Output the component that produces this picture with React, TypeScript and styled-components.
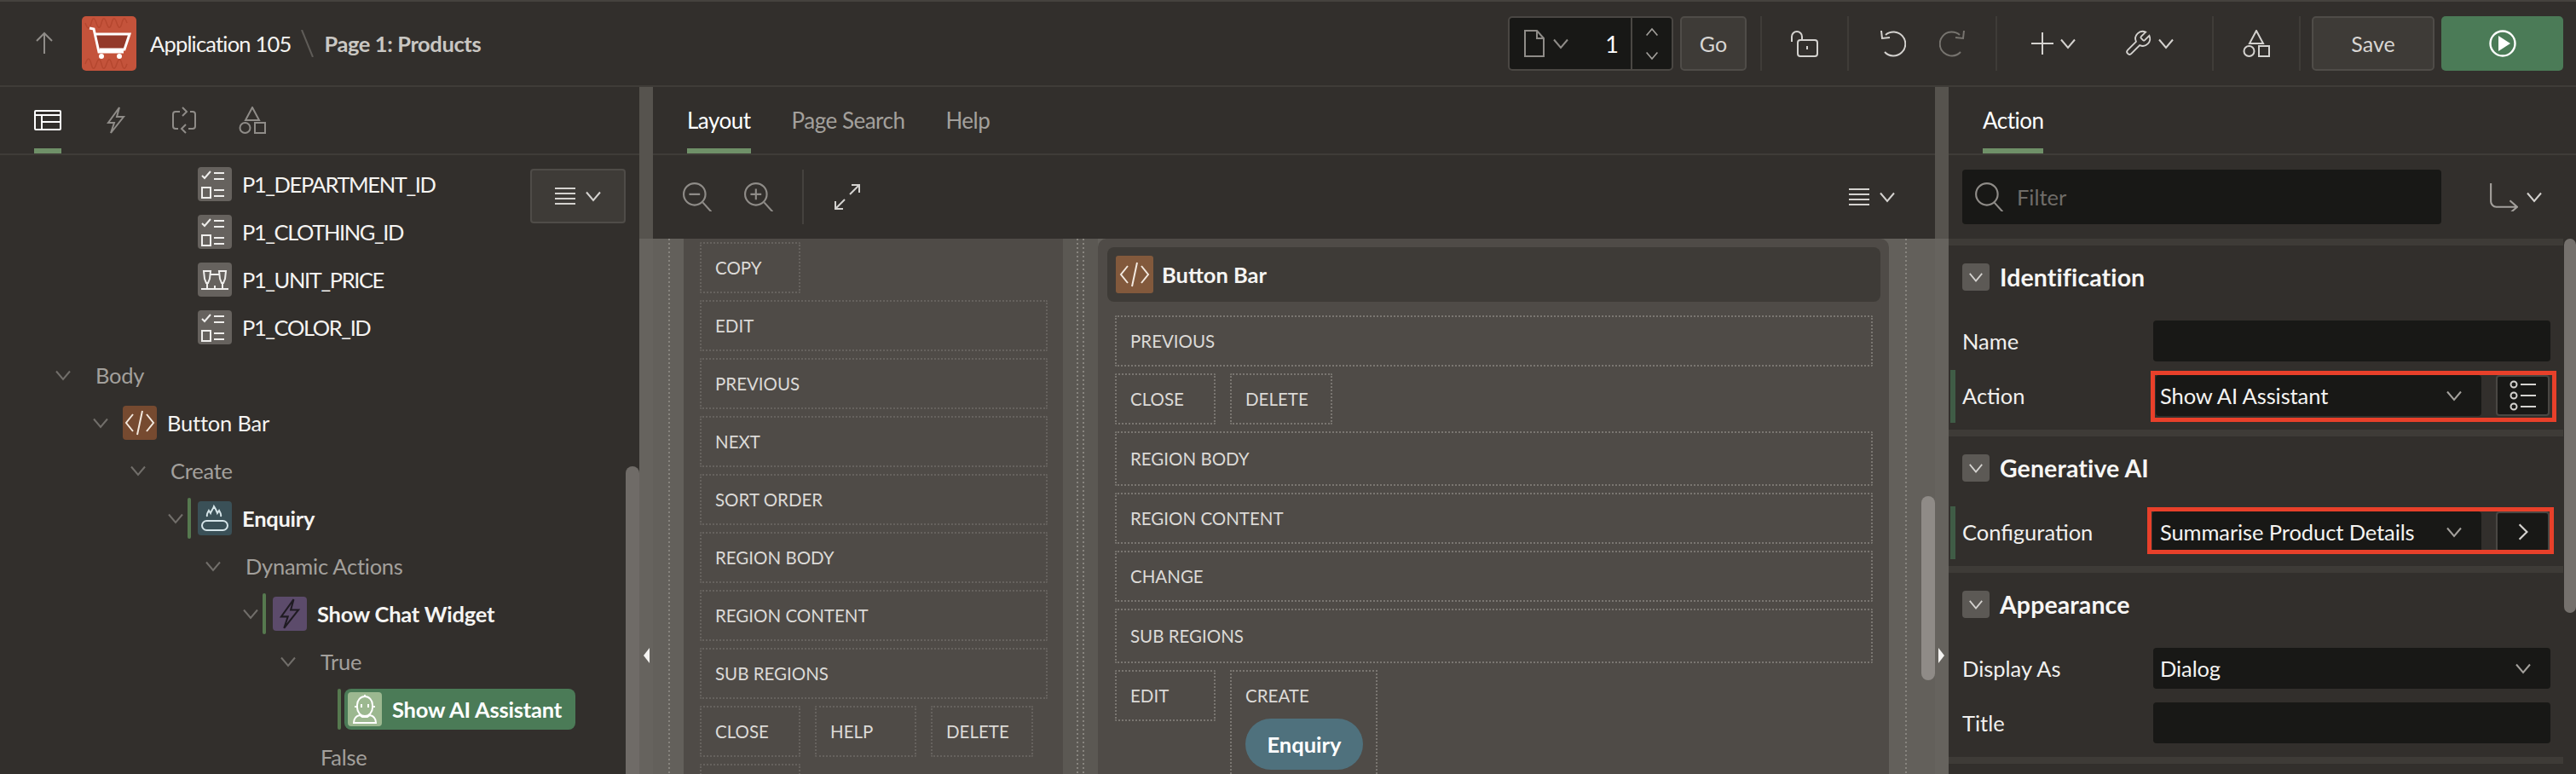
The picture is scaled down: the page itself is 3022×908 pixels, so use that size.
import React, { FC, ReactNode } from 'react';
import styled, { createGlobalStyle } from 'styled-components';

const GlobalStyle = createGlobalStyle`
    html, body {
        margin: 0;
        padding: 0;
        background: #322f2c;
    }
    * {
        box-sizing: border-box;
    }
    body {
        font-family: Lato, "Open Sans", sans-serif;
    }
`;

const PANEL = '#322f2c';
const LINE = '#3f3c38';
const FIELD = '#181816';
const GREEN = '#6f9068';

interface IconProps {
    size?: number;
    w?: number;
    h?: number;
    color?: string;
    sw?: number;
    box?: string;
    children: ReactNode;
}

const Icon: FC<IconProps> = ({ size = 32, w, h, color = '#d4d2cf', sw = 2, box = '0 0 32 32', children }) => (
    <svg width={w ?? size} height={h ?? size} viewBox={box} fill="none" stroke={color} strokeWidth={sw} style={{ display: 'block', flexShrink: 0 }}>
        {children}
    </svg>
);

const Chevron: FC<{ color?: string; size?: number; dir?: 'down' | 'up' | 'right' }> = ({ color = '#d4d2cf', size = 20, dir = 'down' }) => (
    <Icon size={size} color={color} box="0 0 20 20">
        {dir === 'down' && <path d="M2 5.5l8 9.5 8-9.5" />}
        {dir === 'up' && <path d="M2 14.5l8-9.5 8 9.5" />}
        {dir === 'right' && <path d="M6 2l8 8-8 8" />}
    </Icon>
);

const Burger: FC = () => (
    <Icon w={26} h={22} box="0 0 26 22">
        <path d="M1 2h24M1 8h24M1 14h24M1 20h24" />
    </Icon>
);

const Shapes: FC<{ color?: string }> = ({ color }) => (
    <Icon color={color} box="0 0 32 32">
        <path d="M16 1l8 15H8z" />
        <circle cx="7.5" cy="25" r="6" />
        <rect x="19" y="19" width="12" height="12" />
    </Icon>
);

const Bolt: FC<{ color?: string; size?: number; sw?: number }> = ({ color, size = 32, sw = 2 }) => (
    <Icon size={size} color={color} sw={sw}>
        <path d="M20 1L7 19h7l-4 12 15-19h-8z" />
    </Icon>
);

const CheckList: FC = () => (
    <Icon size={40} color="#efeeec" box="0 0 40 40" sw={2}>
        <path d="M5 11l3 3 7-8M19 8h12M19 15h12M19 28h12M19 35h12" transform="translate(0 -1)" />
        <rect x="5" y="24" width="10" height="12" />
    </Icon>
);

const Glasses: FC = () => (
    <Icon size={40} color="#efeeec" box="0 0 40 40" sw={2}>
        <path d="M7 10h8l-1 9-2 5h-2l-2-5zM25 10h8l-1 9-2 5h-2l-2-5zM15 14h10M4 31h32M11 25v6M20 27v4M29 25v6" />
    </Icon>
);

const Code: FC = () => (
    <Icon size={40} color="#f3e9df" box="0 0 40 40">
        <path d="M12 10l-8 10 8 10M28 10l8 10-8 10M23 6l-6 28" />
    </Icon>
);

const Flame: FC = () => (
    <Icon size={40} color="#d5e4e8" box="0 0 40 40">
        <rect x="5" y="23" width="30" height="11" rx="5.5" />
        <path d="M11 18c-1-3 1-5 2-7l2 3c1-3 3-5 4-8 2 3 3 5 4 8l2-3c1 2 3 4 2 7" />
    </Icon>
);

const Robot: FC = () => (
    <Icon size={40} color="#ffffff" box="0 0 40 40">
        <path d="M11 15a9 10 0 0 1 18 0v3a9 10 0 0 1-18 0zM8 17h3M29 17h3M20 5V3M16 14v4M24 14v4" />
        <path d="M14 27c-4 1-7 4-7 9h26c0-5-3-8-7-9l-3 2h-6z" />
    </Icon>
);

const Page = styled.div`
    width: 3022px;
    height: 908px;
    overflow: hidden;
    display: flex;
    flex-direction: column;
    background: ${PANEL};
    color: #fff;
`;

const Header = styled.header`
    height: 102px;
    flex-shrink: 0;
    display: flex;
    align-items: center;
    border-top: 2px solid #45423e;
    border-bottom: 2px solid ${LINE};
    padding: 0 15px 0 36px;
`;

const BackSlot = styled.div`
    width: 32px;
    margin-right: 28px;
`;

const Logo = styled.div`
    width: 64px;
    height: 64px;
    border-radius: 5px;
    background: #c4533b;
    margin-right: 16px;
`;

const AppName = styled.span`
    font-size: 25.5px;
    letter-spacing: -0.8px;
    color: #f5f4f2;
`;

const Slash = styled.div`
    margin: 0 12px;
`;

const PageName = styled.span`
    font-size: 25.5px;
    font-weight: 700;
    letter-spacing: -0.4px;
    color: #c9c7c3;
`;

const Spacer = styled.div`
    flex: 1;
`;

const PageBox = styled.div`
    width: 194px;
    height: 64px;
    display: flex;
    align-items: center;
    background: ${FIELD};
    border: 2px solid #4a4743;
    border-radius: 5px;
`;

const PageType = styled.div`
    display: flex;
    align-items: center;
    gap: 9px;
    margin-left: 17px;
`;

const PageNumber = styled.div`
    flex: 1;
    text-align: right;
    padding-right: 14px;
    font-size: 27px;
`;

const Stepper = styled.div`
    width: 48px;
    height: 100%;
    border-left: 2px solid #4a4743;
    display: flex;
    flex-direction: column;
    align-items: center;
    justify-content: center;
    gap: 11px;
`;

const GhostButton = styled.div<{ $w: number; $ml: number }>`
    width: ${(p) => p.$w}px;
    height: 64px;
    margin-left: ${(p) => p.$ml}px;
    display: flex;
    align-items: center;
    justify-content: center;
    background: #3e3b37;
    border: 2px solid #4f4c48;
    border-radius: 5px;
    font-size: 25px;
    color: #d8d6d3;
`;

const Divider = styled.div<{ $ml?: number }>`
    width: 2px;
    height: 64px;
    margin-left: ${(p) => p.$ml ?? 0}px;
    background: ${LINE};
    flex-shrink: 0;
`;

const IconSlot = styled.div<{ $w: number; $gap?: number; $pad?: number }>`
    width: ${(p) => p.$w}px;
    display: flex;
    align-items: center;
    justify-content: ${(p) => (p.$pad !== undefined ? 'flex-start' : 'center')};
    padding-left: ${(p) => p.$pad ?? 0}px;
    gap: ${(p) => p.$gap ?? 0}px;
    flex-shrink: 0;
`;

const RunButton = styled.div`
    width: 143px;
    height: 64px;
    margin-left: 8px;
    display: flex;
    align-items: center;
    justify-content: center;
    background: #4b7b57;
    border-radius: 5px;
`;

const Main = styled.div`
    flex: 1;
    min-height: 0;
    display: grid;
    grid-template-columns: 750px 16px 1504px 16px 736px;
`;

const Panel = styled.section`
    position: relative;
    display: flex;
    flex-direction: column;
    min-height: 0;
    overflow: hidden;
`;

const Splitter = styled.div`
    position: relative;
    background: linear-gradient(#56534e 0 178px, #66635e 178px);
`;

const SplitterArrow = styled.div<{ $right?: boolean }>`
    position: absolute;
    top: 658px;
    ${(p) => (p.$right ? 'left: 4px;' : 'left: 5px;')}
    width: 0;
    height: 0;
    border-top: 9px solid transparent;
    border-bottom: 9px solid transparent;
    ${(p) => (p.$right ? 'border-left: 7px solid #f4f3f1;' : 'border-right: 7px solid #f4f3f1;')}
`;

const TabBar = styled.div<{ $pad: number; $gap: number }>`
    height: 80px;
    flex-shrink: 0;
    display: flex;
    gap: ${(p) => p.$gap}px;
    padding-left: ${(p) => p.$pad}px;
    border-bottom: 2px solid ${LINE};
`;

const Tab = styled.div<{ $active?: boolean }>`
    height: 78px;
    display: flex;
    align-items: center;
    font-size: 26px;
    letter-spacing: -0.5px;
    color: ${(p) => (p.$active ? '#fff' : '#a3a09c')};
    border-bottom: 6px solid ${(p) => (p.$active ? GREEN : 'transparent')};
    padding-top: 6px;
`;

const IconTab = styled.div<{ $active?: boolean }>`
    width: 32px;
    height: 78px;
    display: flex;
    align-items: center;
    justify-content: center;
    border-bottom: 6px solid ${(p) => (p.$active ? GREEN : 'transparent')};
    padding-top: 6px;
`;

const Tree = styled.div`
    padding-top: 6px;
`;

const Row = styled.div<{ $depth: number }>`
    position: relative;
    height: 56px;
    display: flex;
    align-items: center;
    padding-left: ${(p) => 56 + 44 * p.$depth}px;
`;

const Twisty = styled.div`
    width: 44px;
    flex-shrink: 0;
    padding-left: 8px;
`;

const Marker = styled.div<{ $depth: number }>`
    position: absolute;
    left: ${(p) => 88 + 44 * p.$depth}px;
    top: 4px;
    width: 4px;
    height: 48px;
    border-radius: 2px;
    background: #56794f;
`;

const NodeIcon = styled.div<{ $bg: string }>`
    width: 40px;
    height: 40px;
    border-radius: 4px;
    background: ${(p) => p.$bg};
    display: flex;
    align-items: center;
    justify-content: center;
    margin-right: 12px;
    flex-shrink: 0;
`;

const NodeText = styled.span<{ $strong?: boolean; $caps?: boolean }>`
    font-size: 25.5px;
    color: #f5f4f2;
    font-weight: ${(p) => (p.$strong ? 700 : 400)};
    letter-spacing: ${(p) => (p.$caps ? -1.4 : p.$strong ? -0.25 : -0.2)}px;
`;

const GroupText = styled.span`
    font-size: 25.5px;
    letter-spacing: -0.25px;
    color: #a3a09c;
    margin-left: 12px;
`;

const SelectedChip = styled.div`
    display: flex;
    align-items: center;
    height: 48px;
    margin-left: -4px;
    padding: 0 16px 0 4px;
    border-radius: 8px;
    background: #4b7b57;
    font-size: 25.5px;
    font-weight: 700;
    letter-spacing: -0.2px;
    color: #fff;
`;

const FloatingMenu = styled.div`
    position: absolute;
    left: 622px;
    top: 96px;
    width: 112px;
    height: 64px;
    background: #3e3b37;
    border: 2px solid #4f4c48;
    border-radius: 4px;
    display: flex;
    align-items: center;
    justify-content: center;
    gap: 10px;
`;

const ScrollThumb = styled.div<{ $left: number; $top: number; $w: number; $h: number; $color: string }>`
    position: absolute;
    left: ${(p) => p.$left}px;
    top: ${(p) => p.$top}px;
    width: ${(p) => p.$w}px;
    height: ${(p) => p.$h}px;
    border-radius: 8px;
    background: ${(p) => p.$color};
`;

const Toolbar = styled.div`
    height: 98px;
    flex-shrink: 0;
    display: flex;
    align-items: center;
    padding-left: 32px;
    padding-right: 46px;
`;

const ToolSlot = styled.div<{ $w: number }>`
    width: ${(p) => p.$w}px;
    display: flex;
    justify-content: center;
`;

const ToolDivider = styled.div`
    width: 2px;
    height: 64px;
    background: #45423e;
    margin-right: 20px;
`;

const ToolGap = styled.div`
    width: 10px;
`;

const Canvas = styled.div`
    position: relative;
    flex: 1;
    min-height: 0;
    display: flex;
    background: #63605b;
    overflow: hidden;
`;

const Gutter = styled.div<{ $w: number; $tone?: string; $lines: number[] }>`
    width: ${(p) => p.$w}px;
    flex-shrink: 0;
    background-color: ${(p) => p.$tone ?? '#63605b'};
    background-image: ${(p) =>
        p.$lines
            .map(() => 'repeating-linear-gradient(to bottom, #88857f 0 2px, transparent 2px 5px)')
            .join(', ')};
    background-size: 2px 100%;
    background-repeat: no-repeat;
    background-position: ${(p) => p.$lines.map((x) => `${x}px 0`).join(', ')};
`;

const Column = styled.div<{ $w: number; $pad: string; $rounded?: boolean; $dots: string }>`
    --slot-dots: ${(p) => p.$dots};
    width: ${(p) => p.$w}px;
    flex-shrink: 0;
    padding: ${(p) => p.$pad};
    background: #4f4b47;
    border-radius: ${(p) => (p.$rounded ? '10px 10px 0 0' : '0')};
    display: flex;
    flex-direction: column;
    gap: 8px;
`;

const Slots = styled.div<{ $gap: number; $align?: string }>`
    display: flex;
    flex-shrink: 0;
    gap: ${(p) => p.$gap}px;
    align-items: ${(p) => p.$align ?? 'stretch'};
`;

const Slot = styled.div<{ $w?: number; $h?: number }>`
    ${(p) => (p.$w ? `width: ${p.$w}px;` : 'width: 100%;')}
    flex-shrink: 0;
    height: ${(p) => p.$h ?? 60}px;
    display: flex;
    align-items: center;
    padding-left: 16px;
    border: 2px dotted var(--slot-dots);
    border-radius: 2px;
    font-size: 20.5px;
    color: #dcdad7;
`;

const CreateSlot = styled.div`
    width: 173px;
    height: 130px;
    flex-shrink: 0;
    padding: 16px 16px 0;
    border: 2px dotted var(--slot-dots);
    font-size: 20.5px;
    color: #dcdad7;
`;

const EnquiryPill = styled.div`
    width: 138px;
    height: 60px;
    margin-top: 15px;
    border-radius: 30px;
    background: #4f717d;
    display: flex;
    align-items: center;
    justify-content: center;
    font-size: 25.5px;
    font-weight: 700;
    color: #fff;
`;

const RegionHead = styled.div`
    height: 64px;
    flex-shrink: 0;
    margin: 0 -9px 8px;
    padding: 0 10px;
    display: flex;
    align-items: center;
    gap: 10px;
    background: #3e3b37;
    border-radius: 8px;
    font-size: 25.5px;
    font-weight: 700;
    color: #f5f4f2;
`;

const RegionIcon = styled.div`
    width: 44px;
    height: 44px;
    border-radius: 3px;
    background: #82593c;
    display: flex;
    align-items: center;
    justify-content: center;
`;

const FilterBar = styled.div`
    height: 98px;
    flex-shrink: 0;
    display: flex;
    align-items: center;
    padding-left: 16px;
`;

const FilterField = styled.div`
    width: 562px;
    height: 64px;
    background: ${FIELD};
    border-radius: 4px;
    display: flex;
    align-items: center;
    gap: 16px;
    padding-left: 14px;
    font-size: 25.5px;
    color: #6f6c68;
`;

const Routing = styled.div`
    margin-left: 56px;
    display: flex;
    align-items: center;
    gap: 9px;
`;

const Props = styled.div`
    position: relative;
    flex: 1;
    min-height: 0;
    margin-right: 15px;
`;

const Group = styled.div`
    border-top: 8px solid #3e3b37;
    padding-bottom: 8px;
`;

const GroupHead = styled.div`
    height: 64px;
    margin-top: 5px;
    margin-bottom: 11px;
    display: flex;
    align-items: center;
    gap: 12px;
    padding-left: 16px;
    font-size: 28.5px;
    font-weight: 700;
    letter-spacing: 0.1px;
    color: #f7f6f4;
`;

const Toggle = styled.div`
    width: 32px;
    height: 32px;
    border-radius: 4px;
    background: #5c5955;
    display: flex;
    align-items: center;
    justify-content: center;
`;

const PropRow = styled.div`
    position: relative;
    height: 64px;
    display: flex;
    align-items: center;
    padding-left: 16px;
`;

const ChangeBar = styled.div`
    position: absolute;
    left: 2px;
    top: 2px;
    width: 6px;
    height: 62px;
    background: #3f5c46;
`;

const PropLabel = styled.div`
    width: 224px;
    flex-shrink: 0;
    font-size: 25.5px;
    color: #f1f0ee;
`;

const Field = styled.div<{ $w?: number; $ml?: number; $pl?: number }>`
    width: ${(p) => p.$w ?? 466}px;
    height: 48px;
    margin-left: ${(p) => p.$ml ?? 0}px;
    background: ${FIELD};
    border-radius: 4px;
    display: flex;
    align-items: center;
    justify-content: space-between;
    padding: 0 22px 0 ${(p) => p.$pl ?? 8}px;
    font-size: 25.5px;
    letter-spacing: -0.1px;
    color: #f5f4f2;
    flex-shrink: 0;
`;

const FieldButton = styled.div`
    width: 63px;
    height: 48px;
    margin-left: 17px;
    background: ${FIELD};
    border: 2px solid #4a4743;
    border-radius: 4px;
    display: flex;
    align-items: center;
    justify-content: center;
    flex-shrink: 0;
`;

const Callout = styled.div<{ $left: number; $top: number; $w: number; $h: number }>`
    position: absolute;
    left: ${(p) => p.$left}px;
    top: ${(p) => p.$top}px;
    width: ${(p) => p.$w}px;
    height: ${(p) => p.$h}px;
    border: 5px solid #e8402a;
    pointer-events: none;
`;

const treeIcons = { list: <CheckList />, price: <Glasses /> };

const items: { label: string; icon: keyof typeof treeIcons }[] = [
    { label: 'P1_DEPARTMENT_ID', icon: 'list' },
    { label: 'P1_CLOTHING_ID', icon: 'list' },
    { label: 'P1_UNIT_PRICE', icon: 'price' },
    { label: 'P1_COLOR_ID', icon: 'list' },
];

const leftRows = ['EDIT', 'PREVIOUS', 'NEXT', 'SORT ORDER', 'REGION BODY', 'REGION CONTENT', 'SUB REGIONS'];
const TWIST = '#716e6a';

const App: FC = () => (
    <Page>
        <GlobalStyle />
        <Header>
            <BackSlot>
                <Icon color="#8f8c88"><path d="M16 4v24M7 13l9-9 9 9" /></Icon>
            </BackSlot>
            <Logo>
                <Icon size={64} box="0 0 64 64" color="#fff" sw={3}>
                    <path d="M4 8c3 8 5 8 7 0s4-6 6 0 4 8 6 0 4-6 6 0 4 8 6 0 4-6 6 0 4 8 6 0 4-6 6 0M4 56c3-8 5-8 7 0s4 6 6 0 4-8 6 0 4 6 6 0 4-8 6 0 4 6 6 0 4-8 6 0 4 6 6 0" stroke="#b5472f" strokeWidth="1.5" />
                    <path d="M16 21h40l-6 18H21z" fill="#93392a" stroke="none" />
                    <path d="M9 14l5 1 6 27h29M16 21h40l-6 18H21" />
                    <circle cx="23" cy="47" r="3" fill="#fff" stroke="none" />
                    <circle cx="44" cy="47" r="3" fill="#fff" stroke="none" />
                </Icon>
            </Logo>
            <AppName>Application 105</AppName>
            <Slash>
                <Icon w={15} h={32} box="0 0 15 32" color="#5f5c58"><path d="M1 0l13 32" /></Icon>
            </Slash>
            <PageName>Page 1: Products</PageName>
            <Spacer />
            <PageBox>
                <PageType>
                    <Icon w={24} h={32} box="0 0 24 32" color="#8f8c88"><path d="M1 1h14l8 9v21H1zM15 1v9h8" /></Icon>
                    <Chevron color="#8f8c88" />
                </PageType>
                <PageNumber>1</PageNumber>
                <Stepper>
                    <Chevron dir="up" size={16} color="#a3a09c" />
                    <Chevron size={16} color="#a3a09c" />
                </Stepper>
            </PageBox>
            <GhostButton $w={78} $ml={8}>Go</GhostButton>
            <Divider $ml={16} />
            <IconSlot $w={100}>
                <Icon color="#d4d2cf"><path d="M1 14V8a6 6 0 0 1 12 0v4" /><rect x="8" y="12" width="23" height="19" rx="3" /><path d="M19 19v4" /></Icon>
            </IconSlot>
            <Divider />
            <IconSlot $w={172} $gap={39}>
                <Icon color="#d4d2cf"><path d="M8 6a14 14 0 1 1-1 20M3 1l1 9 9-1" /></Icon>
                <Icon color="#77746f"><path d="M24 6a14 14 0 1 0 1 20M29 1l-1 9-9-1" /></Icon>
            </IconSlot>
            <Divider />
            <IconSlot $w={252} $gap={45} $pad={31}>
                <IconSlot $w={68} $gap={4}>
                    <Icon color="#d4d2cf"><path d="M16 3v26M3 16h26" /></Icon>
                    <Chevron />
                </IconSlot>
                <IconSlot $w={68} $gap={6}>
                    <Icon size={34} color="#d4d2cf" box="0 0 24 24" sw={1.3}>
                        <path d="M14.7 6.3a1 1 0 0 0 0 1.4l1.6 1.6a1 1 0 0 0 1.4 0l3.77-3.77a6 6 0 0 1-7.94 7.94l-6.91 6.91a2.12 2.12 0 0 1-3-3l6.91-6.91a6 6 0 0 1 7.94-7.94l-3.76 3.76z" />
                    </Icon>
                    <Chevron />
                </IconSlot>
            </IconSlot>
            <Divider />
            <IconSlot $w={100}><Shapes color="#d4d2cf" /></IconSlot>
            <Divider />
            <GhostButton $w={144} $ml={13}>Save</GhostButton>
            <RunButton>
                <Icon color="#fff" sw={2.4}>
                    <circle cx="16" cy="16" r="14.5" />
                    <path d="M11 7l14 9-14 9z" fill="#fff" stroke="none" />
                </Icon>
            </RunButton>
        </Header>

        <Main>
            <Panel>
                <TabBar $pad={40} $gap={48}>
                    <IconTab $active>
                        <Icon w={32} h={24} box="0 0 32 24" color="#fff"><rect x="1" y="1" width="30" height="22" rx="1" /><path d="M1 6h30M9 6v17M9 14h22" /></Icon>
                    </IconTab>
                    <IconTab><Bolt color="#8f8c88" /></IconTab>
                    <IconTab>
                        <Icon color="#8f8c88"><path d="M11 6H6a3 3 0 0 0-3 3v14a3 3 0 0 0 3 3h3M21 26h5a3 3 0 0 0 3-3V9a3 3 0 0 0-3-3h-3M14 1l5 5-5 5M18 21l-5 5 5 5" /></Icon>
                    </IconTab>
                    <IconTab><Shapes color="#8f8c88" /></IconTab>
                </TabBar>
                <Tree>
                    {items.map((item) => (
                        <Row $depth={3} key={item.label}>
                            <Twisty />
                            <NodeIcon $bg="#66625e">{treeIcons[item.icon]}</NodeIcon>
                            <NodeText $caps>{item.label}</NodeText>
                        </Row>
                    ))}
                    <Row $depth={0}>
                        <Twisty><Chevron color={TWIST} /></Twisty>
                        <GroupText>Body</GroupText>
                    </Row>
                    <Row $depth={1}>
                        <Twisty><Chevron color={TWIST} /></Twisty>
                        <NodeIcon $bg="#764a30"><Code /></NodeIcon>
                        <NodeText>Button Bar</NodeText>
                    </Row>
                    <Row $depth={2}>
                        <Twisty><Chevron color={TWIST} /></Twisty>
                        <GroupText>Create</GroupText>
                    </Row>
                    <Row $depth={3}>
                        <Twisty><Chevron color={TWIST} /></Twisty>
                        <Marker $depth={3} />
                        <NodeIcon $bg="#3a5057"><Flame /></NodeIcon>
                        <NodeText $strong>Enquiry</NodeText>
                    </Row>
                    <Row $depth={4}>
                        <Twisty><Chevron color={TWIST} /></Twisty>
                        <GroupText>Dynamic Actions</GroupText>
                    </Row>
                    <Row $depth={5}>
                        <Twisty><Chevron color={TWIST} /></Twisty>
                        <Marker $depth={5} />
                        <NodeIcon $bg="#5c4b6b"><Bolt color="#1f1b22" size={36} sw={1.8} /></NodeIcon>
                        <NodeText $strong>Show Chat Widget</NodeText>
                    </Row>
                    <Row $depth={6}>
                        <Twisty><Chevron color={TWIST} /></Twisty>
                        <GroupText>True</GroupText>
                    </Row>
                    <Row $depth={7}>
                        <Twisty />
                        <Marker $depth={7} />
                        <SelectedChip>
                            <NodeIcon $bg="#9cb890"><Robot /></NodeIcon>
                            Show AI Assistant
                        </SelectedChip>
                    </Row>
                    <Row $depth={6}>
                        <Twisty />
                        <GroupText>False</GroupText>
                    </Row>
                </Tree>
                <FloatingMenu>
                    <Burger />
                    <Chevron />
                </FloatingMenu>
                <ScrollThumb $left={734} $top={445} $w={16} $h={480} $color="#6f6b67" />
            </Panel>

            <Splitter><SplitterArrow /></Splitter>

            <Panel>
                <TabBar $pad={40} $gap={48}>
                    <Tab $active>Layout</Tab>
                    <Tab>Page Search</Tab>
                    <Tab>Help</Tab>
                </TabBar>
                <Toolbar>
                    <ToolSlot $w={40}>
                        <Icon size={34} color="#8f8c88"><circle cx="13" cy="13" r="12" /><path d="M22 22l10 11M7 13h12" /></Icon>
                    </ToolSlot>
                    <ToolSlot $w={103}>
                        <Icon size={34} color="#8f8c88"><circle cx="13" cy="13" r="12" /><path d="M22 22l10 11M7 13h12M13 7v12" /></Icon>
                    </ToolSlot>
                    <ToolDivider />
                    <ToolSlot $w={62}>
                        <Icon color="#d4d2cf"><path d="M19 13L30 2M21 2h9v9M13 19L2 30M11 30H2v-9" /></Icon>
                    </ToolSlot>
                    <Spacer />
                    <Burger />
                    <ToolGap />
                    <Chevron />
                </Toolbar>
                <Canvas>
                    <Gutter $w={36} $lines={[18]} />
                    <Column $w={445} $pad="4px 18px 0 19px" $dots="#66625e">
                        <Slot $w={118}>COPY</Slot>
                        {leftRows.map((label) => <Slot key={label}>{label}</Slot>)}
                        <Slots $gap={17}>
                            <Slot $w={118}>CLOSE</Slot>
                            <Slot $w={119}>HELP</Slot>
                            <Slot $w={120}>DELETE</Slot>
                        </Slots>
                        <Slot $w={118} />
                    </Column>
                    <Gutter $w={41} $tone="#5b5853" $lines={[16, 23]} />
                    <Column $w={928} $pad="10px 19px 0 20px" $rounded $dots="#7a7671">
                        <RegionHead>
                            <RegionIcon><Code /></RegionIcon>
                            Button Bar
                        </RegionHead>
                        <Slot>PREVIOUS</Slot>
                        <Slots $gap={17}>
                            <Slot $w={118}>CLOSE</Slot>
                            <Slot $w={120}>DELETE</Slot>
                        </Slots>
                        <Slot $h={64}>REGION BODY</Slot>
                        <Slot>REGION CONTENT</Slot>
                        <Slot>CHANGE</Slot>
                        <Slot $h={64}>SUB REGIONS</Slot>
                        <Slots $gap={17} $align="flex-start">
                            <Slot $w={118}>EDIT</Slot>
                            <CreateSlot>
                                CREATE
                                <EnquiryPill>Enquiry</EnquiryPill>
                            </CreateSlot>
                        </Slots>
                    </Column>
                    <Gutter $w={54} $lines={[19]} />
                    <ScrollThumb $left={1488} $top={302} $w={16} $h={216} $color="#8f8b87" />
                </Canvas>
            </Panel>

            <Splitter><SplitterArrow $right /></Splitter>

            <Panel>
                <TabBar $pad={40} $gap={48}>
                    <Tab $active>Action</Tab>
                </TabBar>
                <FilterBar>
                    <FilterField>
                        <Icon size={34} color="#8f8c88"><circle cx="14" cy="13" r="12" /><path d="M22 22l10 11" /></Icon>
                        Filter
                    </FilterField>
                    <Routing>
                        <Icon size={34} color="#a3a09c"><path d="M2 1v20a6 6 0 0 0 6 6h22M23 20l8 7-8 7" /></Icon>
                        <Chevron />
                    </Routing>
                </FilterBar>
                <Props>
                    <Group>
                        <GroupHead><Toggle><Chevron size={18} /></Toggle>Identification</GroupHead>
                        <PropRow>
                            <PropLabel>Name</PropLabel>
                            <Field />
                        </PropRow>
                        <PropRow>
                            <ChangeBar />
                            <PropLabel>Action</PropLabel>
                            <Field $w={382} $ml={3} $pl={5}>
                                Show AI Assistant
                                <Chevron color="#a3a09c" />
                            </Field>
                            <FieldButton>
                                <Icon w={32} h={36} box="0 0 32 36" color="#d4d2cf">
                                    <circle cx="5" cy="5" r="3.5" /><circle cx="5" cy="18" r="3.5" /><circle cx="5" cy="31" r="3.5" />
                                    <path d="M13 5h18M13 18h18M13 31h18" />
                                </Icon>
                            </FieldButton>
                        </PropRow>
                    </Group>
                    <Group>
                        <GroupHead><Toggle><Chevron size={18} /></Toggle>Generative AI</GroupHead>
                        <PropRow>
                            <ChangeBar />
                            <PropLabel>Configuration</PropLabel>
                            <Field $w={386} $ml={-1} $pl={9}>
                                Summarise Product Details
                                <Chevron color="#a3a09c" />
                            </Field>
                            <FieldButton><Chevron dir="right" size={22} /></FieldButton>
                        </PropRow>
                    </Group>
                    <Group>
                        <GroupHead><Toggle><Chevron size={18} /></Toggle>Appearance</GroupHead>
                        <PropRow>
                            <PropLabel>Display As</PropLabel>
                            <Field>
                                Dialog
                                <Chevron color="#a3a09c" />
                            </Field>
                        </PropRow>
                        <PropRow>
                            <PropLabel>Title</PropLabel>
                            <Field />
                        </PropRow>
                    </Group>
                    <Group />
                    <Callout $left={237} $top={155} $w={476} $h={60} />
                    <Callout $left={233} $top={315} $w={477} $h={55} />
                </Props>
                <ScrollThumb $left={722} $top={178} $w={14} $h={439} $color="#75716d" />
            </Panel>
        </Main>
    </Page>
);

export default App;
